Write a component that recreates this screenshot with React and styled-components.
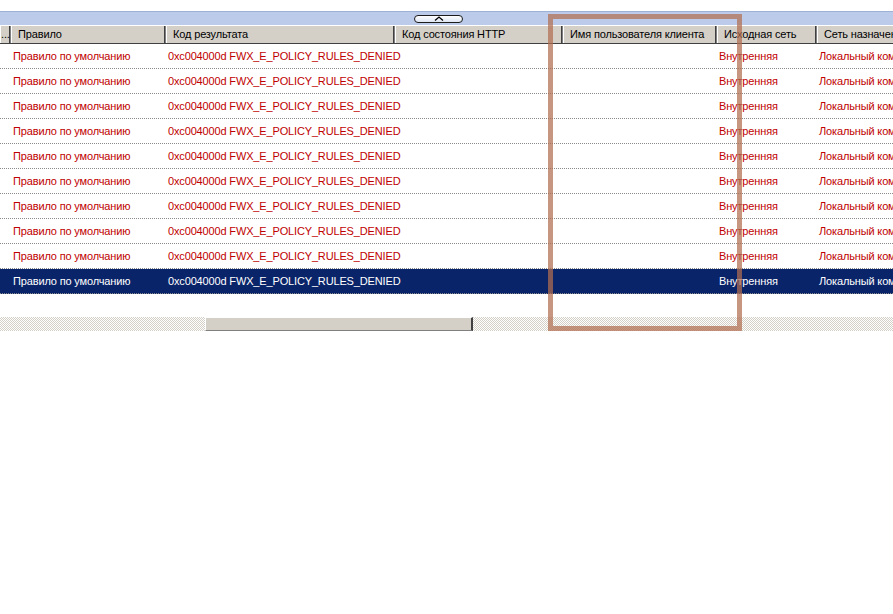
import { styled, createGlobalStyle } from "styled-components";

const Global = createGlobalStyle`
  html, body {
    margin: 0;
    padding: 0;
    background: #ffffff;
  }
  body {
    font-family: "Liberation Sans", Arial, sans-serif;
    font-size: 11px;
    letter-spacing: -0.15px;
  }
`;

const columns = [
  { title: "...", width: 11 },
  { title: "Правило", width: 155 },
  { title: "Код результата", width: 229 },
  { title: "Код состояния HTTP", width: 168 },
  { title: "Имя пользователя клиента", width: 154 },
  { title: "Исходная сеть", width: 100 },
  { title: "Сеть назначения", width: 120 },
];

const rowValues = [
  "",
  "Правило по умолчанию",
  "0xc004000d FWX_E_POLICY_RULES_DENIED",
  "",
  "",
  "Внутренняя",
  "Локальный компьютер",
];

const Page = styled.div`
  position: relative;
  width: 893px;
  height: 614px;
  overflow: hidden;
  background: #ffffff;
  padding-top: 11px;
  box-sizing: border-box;
`;

const Splitter = styled.div`
  height: 13px;
  background: #bccbe9;
  border-top: 1px solid #9db0d6;
  display: flex;
  justify-content: center;
  align-items: center;
`;

const Grip = styled.div`
  width: 47px;
  height: 6px;
  margin-right: 16px;
  border: 1px solid #1c1c1c;
  border-radius: 4px;
  background: linear-gradient(#ffffff, #dfe6f3);
  display: flex;
  justify-content: center;
  align-items: center;
`;

const HeaderRow = styled.div`
  display: flex;
  height: 17px;
  background: #d4d0c8;
  margin-top: 1px;
  border-bottom: 1px solid #404040;
  white-space: nowrap;
`;

const HeaderCell = styled.div`
  flex: 0 0 ${(p) => p.$w}px;
  min-width: 0;
  box-sizing: border-box;
  padding-left: ${(p) => (p.$first ? 0 : 6)}px;
  border-left: 1px solid #ffffff;
  border-right: 1px solid #808080;
  box-shadow: inset -1px 0 0 #404040;
  line-height: 16px;
  color: #000000;
  overflow: hidden;
`;

const Row = styled.div`
  display: flex;
  height: 24px;
  align-items: center;
  white-space: nowrap;
  background: ${(p) => (p.$selected ? "#0a246a" : "#ffffff")};
  color: ${(p) => (p.$selected ? "#ffffff" : "#c00000")};
  border-bottom: 1px dotted #8a8a8a;
`;

const Cell = styled.div`
  flex: 0 0 ${(p) => p.$w}px;
  min-width: 0;
  box-sizing: border-box;
  padding-left: 2px;
  overflow: visible;
`;

const Filler = styled.div`
  height: 23px;
`;

const ScrollTrack = styled.div`
  height: 14px;
  background-color: #ffffff;
  background-image: repeating-conic-gradient(#d4d0c8 0 25%, #ffffff 0 50%);
  background-size: 2px 2px;
  display: flex;
`;

const ScrollThumb = styled.div`
  margin-left: 205px;
  width: 268px;
  box-sizing: border-box;
  background: #d4d0c8;
  border-top: 1px solid #ffffff;
  border-left: 1px solid #ffffff;
  border-right: 2px solid #404040;
  border-bottom: 1px solid #808080;
`;

const Highlight = styled.div`
  position: absolute;
  left: 548px;
  top: 14px;
  width: 194px;
  height: 317px;
  box-sizing: border-box;
  border: 5px solid rgba(178, 110, 80, 0.72);
  pointer-events: none;
`;

const App = () => {
  const rows = Array.from({ length: 10 }, (_, i) => i);
  return (
    <>
      <Global />
      <Page>
        <Splitter>
          <Grip>
            <svg width="10" height="5" viewBox="0 0 10 5">
              <path d="M1 4.5 L5 1 L9 4.5" fill="none" stroke="#000" strokeWidth="1.3" />
            </svg>
          </Grip>
        </Splitter>
        <HeaderRow>
          {columns.map((c, i) => (
            <HeaderCell key={i} $w={c.width} $first={i === 0}>
              {c.title}
            </HeaderCell>
          ))}
        </HeaderRow>
        {rows.map((r) => (
          <Row key={r} $selected={r === 9}>
            {columns.map((c, i) => (
              <Cell key={i} $w={c.width}>
                {rowValues[i]}
              </Cell>
            ))}
          </Row>
        ))}
        <Filler />
        <ScrollTrack>
          <ScrollThumb />
        </ScrollTrack>
        <Highlight />
      </Page>
    </>
  );
};

export default App;
